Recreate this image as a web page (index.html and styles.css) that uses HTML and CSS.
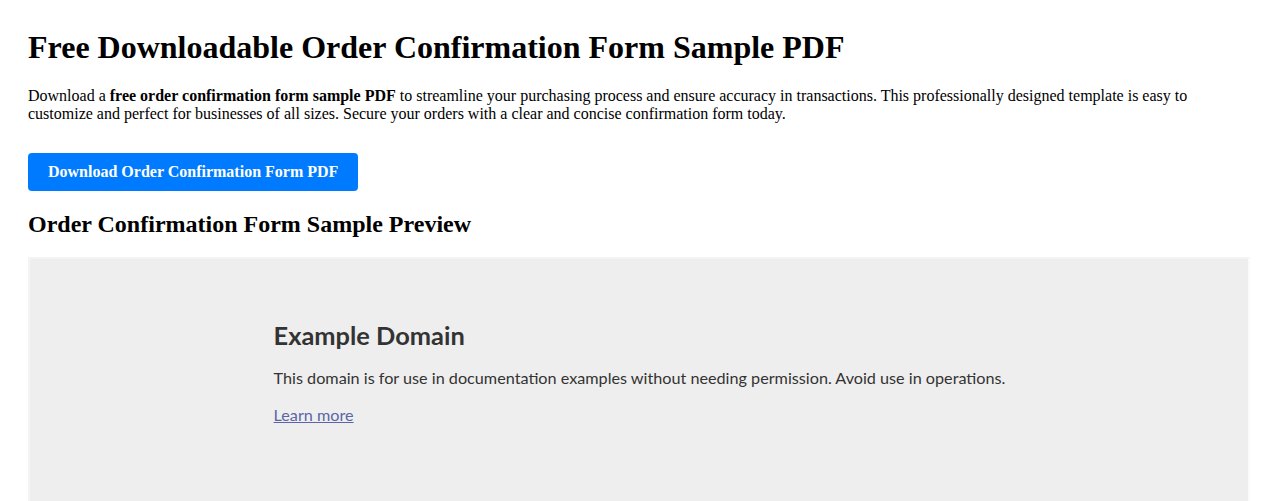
FILE: index.html
```html
<!DOCTYPE html>
<html lang="en">
<head>
<meta charset="utf-8">
<title>Free Downloadable Order Confirmation Form Sample PDF</title>
<link rel="stylesheet" href="styles.css">
</head>
<body>
<main class="page">
  <h1 class="title">Free Downloadable Order Confirmation Form Sample PDF</h1>
  <p class="intro">Download a <strong>free order confirmation form sample PDF</strong> to streamline your purchasing process and ensure accuracy in transactions. This professionally designed template is easy to customize and perfect for businesses of all sizes. Secure your orders with a clear and concise confirmation form today.</p>
  <div class="actions"><a class="btn" href="#">Download Order Confirmation Form PDF</a></div>
  <h2 class="subtitle">Order Confirmation Form Sample Preview</h2>
  <div class="preview">
    <div class="preview-body">
      <h1 class="ex-title">Example Domain</h1>
      <p class="ex-text">This domain is for use in documentation examples without needing permission. Avoid use in operations.</p>
      <p class="ex-text"><a class="ex-link" href="#">Learn more</a></p>
    </div>
  </div>
</main>
</body>
</html>
```
FILE: styles.css
```css
html, body {
  margin: 0;
  padding: 0;
  background: #fff;
}
body {
  font-family: "Liberation Serif", "Times New Roman", serif;
  color: #000;
  overflow: hidden;
}
.page {
  padding: 8px 28px 0 28px;
}
.title {
  font-size: 32px;
  font-weight: bold;
  margin: 21.44px 0 20.5px 0;
  line-height: normal;
}
.intro {
  font-size: 16px;
  margin: 0;
  line-height: normal;
}
.actions {
  margin-top: 30px;
  margin-bottom: 20px;
}
.btn {
  display: inline-block;
  background: #007bff;
  color: #fff;
  font-weight: bold;
  font-size: 16px;
  text-decoration: none;
  padding: 10px 20px;
  border-radius: 4px;
  line-height: 18px;
}
.subtitle {
  font-size: 24px;
  font-weight: bold;
  margin: 19.92px 0 19.5px 0;
  line-height: normal;
}
.preview {
  height: 400px;
  background: #eee;
  border: 2px solid #f4f4f4;
  border-right-color: #fafafa;
  border-bottom-color: #fafafa;
  font-family: "Lato", "Noto Sans", sans-serif;
}
.preview-body {
  width: 60%;
  margin: 0 auto;
  padding-top: 60px;
}
.ex-title {
  font-size: 25.4px;
  font-weight: bold;
  margin: 0 0 16px 0;
  line-height: 32px;
  color: #333;
}
.ex-text {
  font-size: 16.2px;
  line-height: 21px;
  margin: 0 0 16px 0;
  color: #333;
  white-space: nowrap;
}
.ex-link {
  color: #5a65a8;
}
```
